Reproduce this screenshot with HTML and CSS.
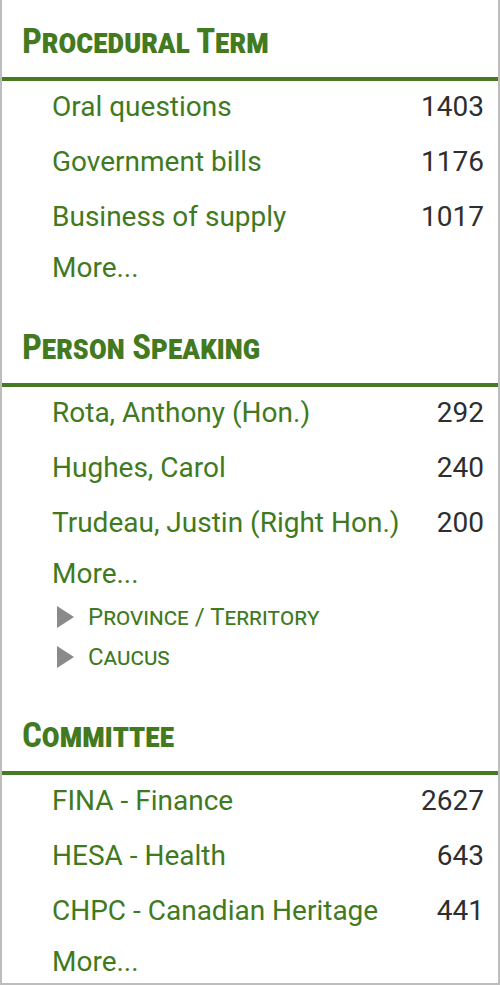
FILE: index.html
```html
<!DOCTYPE html>
<html lang="en">
<head>
<meta charset="utf-8">
<title>Facets</title>
<link rel="stylesheet" href="styles.css">
</head>
<body>
<div class="panel">
  <section class="facet">
    <h2 class="facet-title">Procedural Term</h2>
    <ul class="facet-list">
      <li class="facet-row"><a class="facet-link">Oral questions</a><span class="facet-count">1403</span></li>
      <li class="facet-row"><a class="facet-link">Government bills</a><span class="facet-count">1176</span></li>
      <li class="facet-row"><a class="facet-link">Business of supply</a><span class="facet-count">1017</span></li>
      <li class="facet-more"><a class="facet-link">More...</a></li>
    </ul>
  </section>
  <section class="facet">
    <h2 class="facet-title">Person Speaking</h2>
    <ul class="facet-list">
      <li class="facet-row"><a class="facet-link">Rota, Anthony (Hon.)</a><span class="facet-count">292</span></li>
      <li class="facet-row"><a class="facet-link">Hughes, Carol</a><span class="facet-count">240</span></li>
      <li class="facet-row"><a class="facet-link">Trudeau, Justin (Right Hon.)</a><span class="facet-count">200</span></li>
      <li class="facet-more"><a class="facet-link">More...</a></li>
    </ul>
    <ul class="sub-list">
      <li class="sub-item"><svg class="caret" viewBox="0 0 17 22" width="17" height="22"><polygon points="0,0 17,11 0,22" /></svg><span class="sub-label">Province / Territory</span></li>
      <li class="sub-item"><svg class="caret" viewBox="0 0 17 22" width="17" height="22"><polygon points="0,0 17,11 0,22" /></svg><span class="sub-label">Caucus</span></li>
    </ul>
  </section>
  <section class="facet">
    <h2 class="facet-title">Committee</h2>
    <ul class="facet-list">
      <li class="facet-row"><a class="facet-link">FINA - Finance</a><span class="facet-count">2627</span></li>
      <li class="facet-row"><a class="facet-link">HESA - Health</a><span class="facet-count">643</span></li>
      <li class="facet-row"><a class="facet-link">CHPC - Canadian Heritage</a><span class="facet-count">441</span></li>
      <li class="facet-more"><a class="facet-link">More...</a></li>
    </ul>
  </section>
</div>
</body>
</html>
```
FILE: styles.css
```css
html, body {
  margin: 0;
  padding: 0;
  background: #ffffff;
}

body {
  font-family: Roboto, "Liberation Sans", sans-serif;
}

.panel {
  width: 500px;
  box-sizing: border-box;
  border: 2px solid #bdbdbd;
  border-top: none;
  border-bottom-width: 3px;
  background: #ffffff;
}

.facet + .facet {
  margin-top: 17px;
}

.facet-title {
  margin: 0;
  padding: 22px 0 15px 20px;
  font-size: 35px;
  line-height: 40px;
  font-weight: 700;
  font-stretch: 75%;
  letter-spacing: -0.4px;
  font-variant: small-caps;
  color: #437a1f;
  border-bottom: 4px solid #467a25;
}

.facet-list,
.sub-list {
  list-style: none;
  margin: 0;
  padding: 0;
}

.facet-row {
  display: flex;
  justify-content: space-between;
  align-items: flex-start;
  height: 55px;
  line-height: 52px;
  padding: 0 14px 0 50px;
  font-size: 28px;
}

.facet-more {
  padding: 1px 14px 0 50px;
  line-height: 42px;
  font-size: 28px;
}

.facet-link {
  color: #3f7a1f;
}

.facet-count {
  color: #2e2e2e;
}

.sub-list {
  padding-top: 2px;
}

.sub-item {
  display: flex;
  align-items: center;
  gap: 14px;
  height: 40px;
  padding-left: 55px;
}

.caret {
  fill: #8a8a8a;
  flex: none;
}

.sub-label {
  font-size: 24px;
  line-height: 40px;
  font-variant: small-caps;
  color: #3f7a1f;
}
```
